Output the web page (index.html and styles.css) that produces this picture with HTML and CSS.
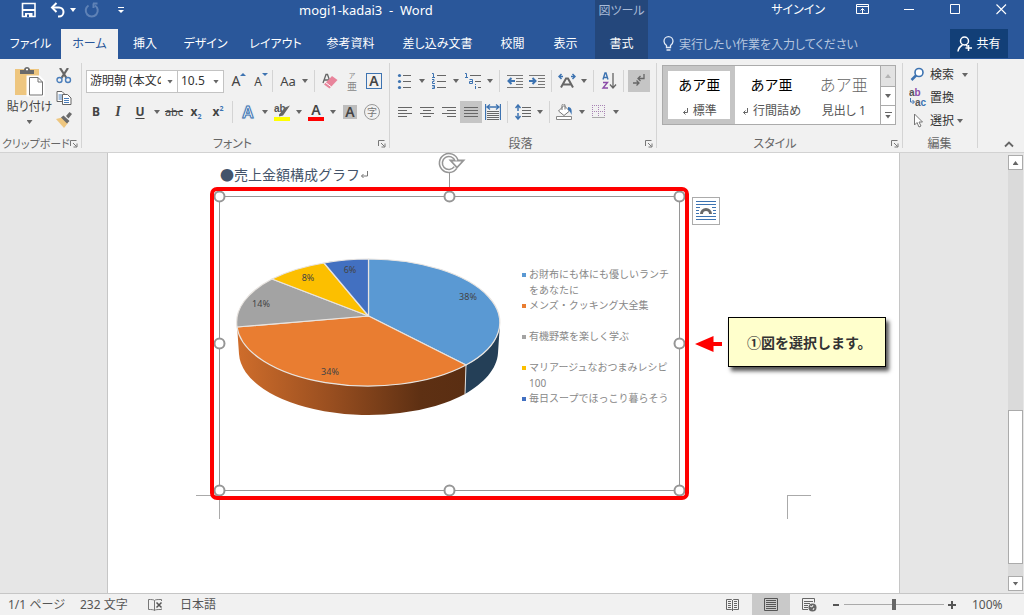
FILE: index.html
```html
<!DOCTYPE html>
<html lang="ja">
<head>
<meta charset="utf-8">
<title>mogi1-kadai3 - Word</title>
<link rel="stylesheet" href="styles.css">
</head>
<body>
<div class="app">
  <header class="header">
    <div class="title-left">
      <button class="qa" aria-label="上書き保存"><svg width="16" height="16" viewBox="0 0 16 16"><path d="M1.5 1.5h12.5v13h-12.5z" fill="none" stroke="#fff" stroke-width="1.6"/><path d="M1 7h13v2h-13zM4 11h7.500v4h-7.500z" fill="#fff"/><path d="M6 12.500h2v2.500h-2z" fill="#2a579a"/></svg></button>
      <button class="qa qa-undo" aria-label="元に戻す"><svg width="16" height="16" viewBox="0 0 16 16"><path d="M2.500 5.500h6.500a4.500 4.500 0 0 1 0 9h-1" fill="none" stroke="#fff" stroke-width="2"/><path d="M6.500 1l-4.500 4.500 4.500 4.500" fill="none" stroke="#fff" stroke-width="2"/></svg><i class="caret light"></i></button>
      <button class="qa qa-redo" aria-label="繰り返し"><svg width="16" height="16" viewBox="0 0 16 16"><path d="M4.500 3.500a6 6 0 1 0 6.500 0M9 1.500h4.500M9.500 1.500v4.500" fill="none" stroke="#5f82b6" stroke-width="2"/></svg></button>
      <button class="qa qa-more" aria-label="クイック アクセス ツール バーのユーザー設定"><svg width="7" height="7" viewBox="0 0 7 7"><path d="M0 .5h6" stroke="#fff"/><path d="M0 3h6l-3 3z" fill="#fff"/></svg></button>
      <h1 class="doc-title">mogi1-kadai3 &nbsp;- &nbsp;Word</h1>
    </div>
    <nav class="tabs">
      <button class="tab">ファイル</button>
      <button class="tab active">ホーム</button>
      <button class="tab">挿入</button>
      <button class="tab">デザイン</button>
      <button class="tab">レイアウト</button>
      <button class="tab">参考資料</button>
      <button class="tab">差し込み文書</button>
      <button class="tab">校閲</button>
      <button class="tab">表示</button>
    </nav>
    <div class="context">
      <span class="context-name">図ツール</span>
      <button class="tab">書式</button>
    </div>
    <div class="title-right">
      <a class="signin" href="#">サインイン</a>
      <button class="win" aria-label="リボンの表示オプション"><svg width="14" height="11" viewBox="0 0 14 11"><path d="M.5.500h12v9h-12zM.5 2.500h12M6.500 9v-4.500M4.500 6.500l2-2 2 2" fill="none" stroke="#fff"/></svg></button>
      <button class="win" aria-label="最小化"><svg width="11" height="11" viewBox="0 0 11 11"><path d="M0 5.500h10" stroke="#fff"/></svg></button>
      <button class="win" aria-label="最大化"><svg width="11" height="11" viewBox="0 0 11 11"><path d="M.5.500h9v9h-9z" fill="none" stroke="#fff"/></svg></button>
      <button class="win" aria-label="閉じる"><svg width="11" height="11" viewBox="0 0 11 11"><path d="M.5.500l9.500 9.500M10 .5L.5 10" fill="none" stroke="#fff" stroke-width="1.100"/></svg></button>
    </div>
    <div class="tell-row">
      <label class="tell"><svg width="12" height="16" viewBox="0 0 12 16"><path d="M3.500 11.500v-2c-1.500-1.200-2.500-2.400-2.500-4.300a4.500 4.500 0 0 1 9 0c0 1.900-1 3.100-2.500 4.300v2zM3.500 14h4" fill="none" stroke="#e3eaf5" stroke-width="1.300"/></svg><input type="text" placeholder="実行したい作業を入力してください" aria-label="実行したい作業"></label>
      <button class="share"><svg width="16" height="16" viewBox="0 0 16 16"><circle cx="7.500" cy="5" r="4" fill="none" stroke="#fff" stroke-width="1.500"/><path d="M1 15.500c.3-3.500 2-5 4.500-6.500M9 9l1.500 1.500M11.500 9v6M8.500 12h6.500" fill="none" stroke="#fff" stroke-width="1.500"/></svg>共有</button>
    </div>
  </header>

  <section class="ribbon" aria-label="ホーム">
    <div class="group g-clip">
      <div class="body clip">
        <button class="paste"><svg width="32" height="32" viewBox="0 0 32 32"><path d="M1 4h24v26h-24z" fill="#eec67f"/><path d="M6 5h4c0-4 6-4 6 0h4v4h-14z" fill="#6a6a6a"/><path d="M12 4.500h2" stroke="#fff" stroke-width="1.500"/><path d="M14 12h11l4 4v14h-15z" fill="#fff" stroke="#fff" stroke-width="3"/><path d="M15.500 12.500h8.500l4.500 4.500v13h-13zM24 12.500v4.500h4.500" fill="#fff" stroke="#737373"/></svg><span>貼り付け</span><i class="caret"></i></button>
        <div class="clip-side">
          <button class="ib" aria-label="切り取り"><svg width="16" height="16" viewBox="0 0 16 16"><path d="M4 0l6.500 10M12 0l-6.500 10" stroke="#666" stroke-width="2.200"/><g fill="#f1f1f1" stroke="#4a7ebb" stroke-width="1.400"><circle cx="3.500" cy="12" r="2.500"/><circle cx="12" cy="12" r="2.500"/></g></svg></button>
          <button class="ib" aria-label="コピー"><svg width="16" height="16" viewBox="0 0 16 16"><path d="M1 1.500h5l3 3v7h-8z" fill="#fff" stroke="#666"/><path d="M2.500 5h4M2.500 7h4M2.500 9h4" stroke="#4a7ebb"/><path d="M6.500 4.500h5l3.500 3.500v6.500h-8.500z" fill="#fff" stroke="#666"/><path d="M8 8.500h5M8 10.500h5M8 12.500h5" stroke="#4a7ebb"/></svg></button>
          <button class="ib" aria-label="書式のコピー/貼り付け"><svg width="16" height="16" viewBox="0 0 16 16"><path d="M0 7l6-1.500 6 5.500-4 5z" fill="#eec67f"/><path d="M5 5.500l6 6 2.500-2.500-6-5.500zM10 4l3.500-4 2.500 2-3.500 4.500z" fill="#6a6a6a"/></svg></button>
        </div>
      </div>
      <div class="foot"><span>クリップボード</span><button class="launch" aria-label="クリップボードの設定"><svg width="8" height="8" viewBox="0 0 8 8"><path d="M.5 6v-5.500h6M3 3l3.500 3.500M7 3.500v3.500h-3.500" fill="none" stroke="#777"/></svg></button></div>
    </div>

    <div class="group g-font">
      <div class="body rows">
        <div class="row">
          <span class="combo name"><select aria-label="フォント"><option>游明朝 (本文のフォント - 日本語)</option></select><i class="caret"></i></span>
          <span class="combo size"><select aria-label="フォント サイズ"><option>10.5</option></select><i class="caret"></i></span>
          <button class="ib" aria-label="フォントの拡大"><span class="grow">A</span><i class="up-mark"></i></button>
          <button class="ib" aria-label="フォントの縮小"><span class="shrink">A</span><i class="down-mark"></i></button>
          <span class="sep"></span>
          <button class="split"><span class="aa">Aa</span><i class="caret"></i></button>
          <span class="sep"></span>
          <button class="ib" aria-label="すべての書式をクリア"><svg width="16" height="16" viewBox="0 0 16 16"><path d="M1 10l3-8.500h1.500l3 8.500M2.500 7h5" fill="none" stroke="#666" stroke-width="1.300"/><path d="M2 11.500l8-8.500 5.500 4-8 8.500z" fill="#e8849b"/><path d="M3.500 9.500l6 4.500" stroke="#fff"/></svg></button>
          <button class="ib ruby" aria-label="ルビ"><span class="kana">ア</span><span class="kanji">亜</span></button>
          <button class="ib" aria-label="囲み線"><span class="boxed">A</span></button>
        </div>
        <div class="row">
          <button class="ib b">B</button>
          <button class="ib i">I</button>
          <button class="split u"><span>U</span><i class="caret"></i></button>
          <button class="ib strike">abc</button>
          <button class="ib subsup">x<sub>2</sub></button>
          <button class="ib subsup">x<sup>2</sup></button>
          <span class="sep"></span>
          <button class="split"><span class="effect">A</span><i class="caret"></i></button>
          <button class="split" aria-label="蛍光ペンの色"><svg width="18" height="20" viewBox="0 0 18 20"><text x="1" y="10" class="hl-text">ab</text><path d="M6 12.500l6-7 5-2-7 10-4 1z" fill="#666"/><path d="M1 15h16v4h-16z" fill="#ff0"/></svg><i class="caret"></i></button>
          <button class="split"><span class="font-color">A</span><i class="caret"></i></button>
          <button class="ib" aria-label="文字の網かけ"><span class="shaded">A</span></button>
          <button class="ib" aria-label="囲い文字"><span class="circled">字</span></button>
        </div>
      </div>
      <div class="foot"><span>フォント</span><button class="launch" aria-label="フォントの設定"><svg width="8" height="8" viewBox="0 0 8 8"><path d="M.5 6v-5.500h6M3 3l3.500 3.500M7 3.500v3.500h-3.500" fill="none" stroke="#777"/></svg></button></div>
    </div>

    <div class="group g-para">
      <div class="body rows">
        <div class="row">
          <button class="split" aria-label="箇条書き"><svg width="16" height="16" viewBox="0 0 16 16"><path d="M6 2.500h8M6 8.500h8M6 14.500h8" stroke="#666"/><g fill="#3d73b1"><circle cx="2.500" cy="2.500" r="1.600"/><circle cx="2.500" cy="8.500" r="1.600"/><circle cx="2.500" cy="14.500" r="1.600"/></g></svg><i class="caret"></i></button>
          <button class="split" aria-label="段落番号"><svg width="16" height="16" viewBox="0 0 16 16"><path d="M6 2.500h9M6 8.500h9M6 14.500h9" stroke="#666"/><path d="M1 .5h1.500v4M1 4.500h3M1 6.500h2v2h-1.500v2h2.500M1 12.500h2.500v3h-2.500M1.500 14h2" fill="none" stroke="#3d73b1"/></svg><i class="caret"></i></button>
          <button class="split" aria-label="アウトライン"><svg width="18" height="18" viewBox="0 0 18 18"><path d="M6 3.500h11M11 9.500h6M14 15.500h3" stroke="#666"/><path d="M1 1.500h1.500v3.500M1 5.500h3M5.500 7.500h3v4h-3v-2h3M11.500 12v1M11.500 14v3" fill="none" stroke="#3d73b1"/></svg><i class="caret"></i></button>
          <span class="sep"></span>
          <button class="ib" aria-label="インデントを減らす"><svg width="16" height="16" viewBox="0 0 16 16"><path d="M0 2.500h16M9 5.500h7M9 8.500h7M9 11.500h7M0 14.500h16" stroke="#777"/><path d="M8 8h-6M4.500 5l-3 3 3 3" fill="none" stroke="#3d73b1" stroke-width="2"/></svg></button>
          <button class="ib" aria-label="インデントを増やす"><svg width="16" height="16" viewBox="0 0 16 16"><path d="M0 2.500h16M9 5.500h7M9 8.500h7M9 11.500h7M0 14.500h16" stroke="#777"/><path d="M0 8h6M3.500 5l3 3-3 3" fill="none" stroke="#3d73b1" stroke-width="2"/></svg></button>
          <span class="sep"></span>
          <button class="split" aria-label="拡張書式"><svg width="18" height="16" viewBox="0 0 18 16"><path d="M3 14.500l5-9h2l5 9M5 11.500h8" fill="none" stroke="#666" stroke-width="2"/><path d="M3.500 1l-2.500 2.500 2.500 2.500M1 3.500h4M14.500 1l2.500 2.500-2.500 2.500M17 3.500h-4" fill="none" stroke="#3d73b1" stroke-width="1.500"/></svg><i class="caret"></i></button>
          <span class="sep"></span>
          <button class="ib" aria-label="並べ替え"><svg width="16" height="18" viewBox="0 0 16 18"><path d="M2 7.500l2-6.500h1l2 6.500M2.500 5.500h4" fill="none" stroke="#3d73b1" stroke-width="1.400"/><path d="M2 10.500h4.500l-4.500 5.500h5" fill="none" stroke="#8b4ba8" stroke-width="1.400"/><path d="M12 1v15M9 12.500l3 3.500 3-3.500" fill="none" stroke="#666" stroke-width="1.300"/></svg></button>
          <span class="sep"></span>
          <button class="ib pressed" aria-label="編集記号の表示/非表示"><svg width="14" height="16" viewBox="0 0 14 16"><path d="M12 1v4.500h-6M8.500 3l-2.500 2.500 2.500 2.500M1 10h6M4.500 7.500l2.500 2.500-2.500 2.500" fill="none" stroke="#666" stroke-width="1.300"/></svg></button>
        </div>
        <div class="row">
          <button class="ib" aria-label="左揃え"><svg width="14" height="14" viewBox="0 0 14 14"><path d="M0 2.500h14M0 5.500h9M0 8.500h14M0 11.500h9" stroke="#666"/></svg></button>
          <button class="ib" aria-label="中央揃え"><svg width="14" height="14" viewBox="0 0 14 14"><path d="M0 2.500h14M3 5.500h8M0 8.500h14M3 11.500h8" stroke="#666"/></svg></button>
          <button class="ib" aria-label="右揃え"><svg width="14" height="14" viewBox="0 0 14 14"><path d="M0 2.500h14M5 5.500h9M0 8.500h14M5 11.500h9" stroke="#666"/></svg></button>
          <button class="ib pressed" aria-label="両端揃え"><svg width="14" height="14" viewBox="0 0 14 14"><path d="M0 2.500h14M0 5.500h14M0 8.500h14M0 11.500h14" stroke="#666"/></svg></button>
          <button class="ib" aria-label="均等割り付け"><svg width="16" height="16" viewBox="0 0 16 16"><path d="M.5 0v16M15.500 0v16M2 3h12M5 .500l-3 2.500 3 2.500M11 .500l3 2.500-3 2.500" fill="none" stroke="#3d73b1" stroke-width="1.300"/><path d="M2 7.500h12M2 9.500h12M2 11.500h12M2 13.500h12M2 15.500h12" stroke="#666"/></svg></button>
          <span class="sep"></span>
          <button class="split" aria-label="行間"><svg width="16" height="16" viewBox="0 0 16 16"><path d="M7 3.500h9M7 6.500h9M7 9.500h9M7 12.500h9" stroke="#666"/><path d="M3 1v6M.5 4l2.500-3 2.500 3M3 9v6M.5 12l2.500 3 2.500-3" fill="none" stroke="#3d73b1" stroke-width="1.500"/></svg><i class="caret"></i></button>
          <span class="sep"></span>
          <button class="split" aria-label="塗りつぶし"><svg width="18" height="16" viewBox="0 0 18 16"><path d="M2.500 7l5.500-5.500 5.500 5.500-5.500 4.500zM6 6v-4.500c0-2 3-2 3 0v4" fill="#fff" stroke="#777"/><path d="M12 3c4 0 4 4 3.500 8-1-2.500-1.500-4-3.500-5z" fill="#3d73b1"/><path d="M.5 12.500h15v3h-15z" fill="#fff" stroke="#888"/></svg><i class="caret"></i></button>
          <button class="split" aria-label="罫線"><svg width="14" height="14" viewBox="0 0 14 14"><path d="M0 .5h13M12.500 0v13M.5 0v13M6.500 0v12M0 6.500h13" fill="none" stroke="#a884b4" stroke-dasharray="1 1"/><path d="M0 12.500h13" stroke="#aaa"/></svg><i class="caret"></i></button>
        </div>
      </div>
      <div class="foot"><span>段落</span><button class="launch" aria-label="段落の設定"><svg width="8" height="8" viewBox="0 0 8 8"><path d="M.5 6v-5.500h6M3 3l3.500 3.500M7 3.500v3.500h-3.500" fill="none" stroke="#777"/></svg></button></div>
    </div>

    <div class="group g-style">
      <div class="body gallery-wrap">
        <div class="gallery">
          <button class="style selected"><b>あア亜</b><span><svg width="7" height="7" viewBox="0 0 7 7"><path d="M5.500 0v4.500h-4M3.500 2.500l-2 2 2 2" fill="none" stroke="#666"/></svg>標準</span></button>
          <button class="style"><b>あア亜</b><span><svg width="7" height="7" viewBox="0 0 7 7"><path d="M5.500 0v4.500h-4M3.500 2.500l-2 2 2 2" fill="none" stroke="#666"/></svg>行間詰め</span></button>
          <button class="style heading"><b>あア亜</b><span>見出し 1</span></button>
          <div class="gallery-nav">
            <button class="off" aria-label="前の行"><i class="caret up"></i></button>
            <button aria-label="次の行"><i class="caret"></i></button>
            <button aria-label="その他"><i class="bar"></i><i class="caret"></i></button>
          </div>
        </div>
      </div>
      <div class="foot"><span>スタイル</span><button class="launch" aria-label="スタイルの設定"><svg width="8" height="8" viewBox="0 0 8 8"><path d="M.5 6v-5.500h6M3 3l3.500 3.500M7 3.500v3.500h-3.500" fill="none" stroke="#777"/></svg></button></div>
    </div>

    <div class="group g-edit">
      <div class="body edit">
        <button><svg width="16" height="16" viewBox="0 0 16 16"><path d="M1.500 13l5-5" stroke="#3d73b1" stroke-width="2.500"/><circle cx="9" cy="5.500" r="4" fill="#fff" stroke="#3d73b1" stroke-width="1.600"/></svg>検索<i class="caret far"></i></button>
        <button><svg width="18" height="22" viewBox="0 0 18 22"><text x="0" y="9" class="rep">a<tspan fill="#8b4ba8">b</tspan></text><text x="6" y="19" class="rep">a<tspan fill="#3d73b1">c</tspan></text><path d="M1.500 11v4h3.500M3.500 13l2 2-2 2" fill="none" stroke="#3d73b1"/></svg>置換</button>
        <button><svg width="16" height="16" viewBox="0 0 16 16"><path d="M4.500 1v11l2.500-2.500 2 4.500 2-1-2-4h3.500z" fill="#fff" stroke="#777"/></svg>選択<i class="caret"></i></button>
      </div>
      <div class="foot"><span>編集</span></div>
    </div>
    <button class="collapse" aria-label="リボンを折りたたむ"><svg width="10" height="7" viewBox="0 0 10 7"><path d="M1 5.500l4-4 4 4" fill="none" stroke="#666" stroke-width="1.800"/></svg></button>
  </section>

  <main class="workspace">
    <div class="desk">
      <article class="page">
        <h2 class="heading-line">●売上金額構成グラフ<svg width="9" height="10" viewBox="0 0 9 10"><path d="M7.500 1v5h-6M3.500 4l-2 2 2 2" fill="none" stroke="#777"/></svg></h2>
        <figure class="chart">
          <svg class="pie" width="300" height="295" viewBox="219 196 300 295" role="img" aria-label="売上金額構成グラフ">
            <defs><linearGradient id="side" x1="0" x2="1"><stop offset="0" stop-color="#cf6d2b"/><stop offset=".4" stop-color="#9a4f20"/><stop offset=".8" stop-color="#5e3013"/><stop offset="1" stop-color="#5a2e12"/></linearGradient></defs>
            <path d="M237 325l2 29a129.500 63 0 0 0 226 40l1-29a131.500 63.500 0 0 1-229-40z" fill="url(#side)"/>
            <path d="M500 323l-2 30c-1 16-14 30-33 41l1-29c22-11 33-26 34-42z" fill="#243f57"/>
            <g stroke="#e8e4e0" stroke-width="1.200" stroke-linejoin="round">
              <path d="M368.500 316V259A131.500 63.500 0 0 1 466 365z" fill="#5a99d3"/>
              <path d="M368.500 316L466 365A131.500 63.500 0 0 1 237 327z" fill="#e97d31"/>
              <path d="M368.500 316L237 327A131.500 63.500 0 0 1 272 279z" fill="#a3a3a3"/>
              <path d="M368.500 316L272 279A131.500 63.500 0 0 1 324 263z" fill="#fcbf00"/>
              <path d="M368.500 316L324 263A131.500 63.500 0 0 1 368.500 259z" fill="#4270c1"/>
            </g>
            <path d="M466 365l-1 29" stroke="#ddd"/>
            <g class="pct"><text x="468" y="300">38%</text><text x="330" y="375">34%</text><text x="261" y="307">14%</text><text x="308" y="281">8%</text><text x="350" y="273">6%</text></g>
          </svg>
          <ul class="legend">
            <li class="k1">お財布にも体にも優しいランチ<br>をあなたに</li>
            <li class="k2">メンズ・クッキング大全集</li>
            <li class="k3">有機野菜を楽しく学ぶ</li>
            <li class="k4">マリアージュなおつまみレシピ<br>100</li>
            <li class="k5">毎日スープでほっこり暮らそう</li>
          </ul>
          <svg class="selection" width="461" height="295" viewBox="0 0 461 295">
            <path d="M.5.500h460v294h-460zM230.500 0v-26" fill="none" stroke="#969696"/>
            <g fill="#fff" stroke="#969696" stroke-width="2"><circle cx=".5" cy=".5" r="5"/><circle cx="230.500" cy=".5" r="5"/><circle cx="460.500" cy=".5" r="5"/><circle cx=".5" cy="147.500" r="5"/><circle cx="460.500" cy="147.500" r="5"/><circle cx=".5" cy="294.500" r="5"/><circle cx="230.500" cy="294.500" r="5"/><circle cx="460.500" cy="294.500" r="5"/></g>
            <path d="M236.500 -28.500a8 8 0 1 1 1-7" fill="none" stroke="#969696" stroke-width="4.500"/>
            <path d="M231.500 -35.500h13l-6.500 7z" fill="#fff" stroke="#969696" stroke-width="1.800"/>
            <path d="M236.500 -28.500a8 8 0 1 1 1-7" fill="none" stroke="#fff" stroke-width="1.400"/>
          </svg>
          <div class="red-frame"></div>
          <button class="layout-options" aria-label="レイアウト オプション"><svg width="20" height="20" viewBox="0 0 20 20"><path d="M0 .5h20M0 3.500h20M0 6.500h4M16 6.500h4M0 9.500h3M17 9.500h3M0 12.500h3M17 12.500h3M0 15.500h20M0 18.500h20" stroke="#3d73b1"/><path d="M5.500 13a4.500 4.500 0 0 1 9 0" fill="none" stroke="#6a6a6a" stroke-width="3"/></svg></button>
          <svg class="arrow" width="28" height="16" viewBox="0 0 28 16"><path d="M0 8L18.500 0v6H27v4h-8.500v6z" fill="#f00"/></svg>
          <p class="callout">①図を選択します。</p>
        </figure>
        <div class="crops"><i class="crop left"></i><i class="crop right"></i></div>
      </article>
    </div>
    <div class="scroll">
      <button aria-label="上へ"><i class="caret up"></i></button>
      <div class="track"><div class="thumb"></div></div>
      <button aria-label="下へ"><i class="caret"></i></button>
    </div>
  </main>

  <footer class="status">
    <span class="st-page">1/1 ページ</span>
    <span class="st-words">232 文字</span>
    <button class="st-proof" aria-label="校正"><svg width="15" height="13" viewBox="0 0 15 13"><path d="M6.500 12.500c-1-1-3-1-6-1v-10c3 0 5 0 6 1zM6.500 2.500c1-1 3-1 7-1v1.500M6.500 12.500c1-1 3-1 7-1v-1" fill="none" stroke="#777"/><path d="M8.500 4.500l5 5M13.500 4.500l-5 5" stroke="#555" stroke-width="1.500"/></svg></button>
    <span>日本語</span>
    <span class="spring"></span>
    <button class="view" aria-label="閲覧モード"><svg width="14" height="14" viewBox="0 0 14 14"><path d="M.5 1.500h5l1 1 1-1h5v10h-5l-1 1-1-1h-5zM6.500 2v11M2 3.500h3M2 5.500h3M2 7.500h3M2 9.500h3M8 3.500h3M8 5.500h3M8 7.500h3M8 9.500h3" fill="none" stroke="#666"/></svg></button>
    <button class="view on" aria-label="印刷レイアウト"><svg width="14" height="14" viewBox="0 0 14 14"><path d="M.5.500h13v12h-13zM2 2.500h10M2 4.500h10M2 6.500h10M2 8.500h10M2 10.500h10" fill="none" stroke="#555"/></svg></button>
    <button class="view" aria-label="Web レイアウト"><svg width="15" height="14" viewBox="0 0 15 14"><path d="M6 11.500h-5.500v-11h12v4M2 3.500h9M2 5.500h6M2 7.500h4M2 9.500h4" fill="none" stroke="#666"/><circle cx="10.500" cy="9.500" r="4" fill="#666"/><path d="M8 8l2 1 1-2M11 12l1-2" fill="none" stroke="#f1f1f1"/></svg></button>
    <button class="zoom-btn" aria-label="縮小"><svg width="10" height="10" viewBox="0 0 10 10"><path d="M2 5h6" stroke="#555" stroke-width="2"/></svg></button>
    <input class="zoom" type="range" min="0" max="100" value="50" aria-label="ズーム">
    <button class="zoom-btn" aria-label="拡大"><svg width="10" height="10" viewBox="0 0 10 10"><path d="M1 5h8M5 1v8" stroke="#555" stroke-width="2"/></svg></button>
    <span class="pctval">100%</span>
  </footer>
</div>
</body>
</html>
```
FILE: styles.css
```css
* { box-sizing: border-box; }
body {
  margin: 0;
  font: 12px/16px "Noto Sans", "Noto Sans CJK JP", sans-serif;
  font-feature-settings: "palt";
  color: #444;
}
button, input, select {
  font: inherit;
  font-feature-settings: inherit;
  color: inherit;
  border: 0;
  padding: 0;
  margin: 0;
  background: none;
}
button { display: flex; align-items: center; justify-content: center; white-space: nowrap; }
svg { display: block; flex: none; }
.app { display: flex; flex-direction: column; min-height: 100vh; }

.caret { display: block; flex: none; width: 6px; height: 4px; background: #666; clip-path: polygon(0 0, 100% 0, 50% 100%); }
.caret.up { transform: scaleY(-1); }
.caret.light { background: #fff; }

/* Title bar and tabs */
.header {
  display: grid;
  grid-template-columns: 595px 53px 1fr;
  grid-template-rows: 29px 30px;
  background: #2a579a;
  color: #fff;
}
.title-left { display: flex; align-items: flex-start; padding: 2px 0 0 21px; }
.qa { height: 16px; }
.qa-undo { gap: 4px; margin-left: 13px; }
.qa-redo { margin-left: 8px; }
.qa-more { margin-left: 18px; }
.doc-title { margin: 0 0 0 174px; font-size: 13px; font-weight: 400; line-height: 16px; }
.tabs { grid-row: 2; grid-column: 1; display: grid; grid-template-columns: 61px 57px 54px 67px 73px 77px 97px 53px 53px; }
.tab { color: #fff; }
.tab.active { background: #f1f1f1; color: #2a579a; }
.context { grid-column: 2; grid-row: 1 / 3; display: grid; grid-template-rows: 29px 30px; background: #24477b; }
.context-name { color: #a9bbd7; text-align: center; line-height: 22px; }
.title-right { display: flex; justify-content: flex-end; align-items: flex-start; padding-top: 1px; }
.signin { color: #fff; text-decoration: none; line-height: 18px; margin-right: 15px; }
.win { width: 46px; height: 16px; }
.tell-row { grid-column: 3; grid-row: 2; display: flex; justify-content: space-between; align-items: flex-start; padding: 0 16px 0 15px; }
.tell { display: flex; gap: 4px; align-items: center; height: 30px; flex: 1; }
.tell input { flex: 1; height: 20px; }
.tell input::placeholder { color: #b6c6df; opacity: 1; }
.share { width: 58px; height: 29px; gap: 3px; background: #123f77; }

/* Ribbon */
.ribbon { display: flex; background: #f1f1f1; border-bottom: 1px solid #d2d2d2; height: 94px; position: relative; }
.group { display: flex; flex-direction: column; justify-content: space-between; position: relative; flex: none; }
.group::after { content: ""; position: absolute; right: 0; top: 4px; bottom: 4px; width: 1px; background: #d4d4d4; }
.g-clip { width: 82px; }
.g-font { width: 308px; padding-left: 3px; }
.g-para { width: 267px; padding-left: 4px; }
.g-style { width: 246px; }
.g-edit { width: 75px; }
.foot { display: flex; align-items: center; justify-content: center; height: 16px; color: #666; padding: 0 4px 0 2px; }
.foot span { flex: 1; text-align: center; white-space: nowrap; }
.launch { width: 8px; height: 12px; }
.g-clip .foot { font-size: 11px; }
.g-clip .foot span { text-align: left; }
.body { flex: 1; }
.clip { display: flex; padding: 6px 0 0 8px; }
.paste { flex-direction: column; justify-content: flex-start; width: 43px; }
.paste span { line-height: 20px; }
.paste .caret { margin-top: 3px; }
.clip-side { display: flex; flex-direction: column; margin-left: 2px; }
.ib { width: 22px; height: 22px; position: relative; flex: none; }
.split { width: 34px; height: 22px; flex: none; display: grid; grid-template-columns: 22px 12px; justify-items: center; align-items: center; }
.pressed { background: #c5c5c5; }
.rows { display: flex; flex-direction: column; gap: 9px; padding-top: 11px; }
.row { display: flex; align-items: center; height: 22px; }
.sep { width: 1px; height: 22px; margin: 0 4px 0 3px; background: #d4d4d4; }
.combo { position: relative; height: 23px; background: #fff; border: 1px solid #c3c3c3; overflow: hidden; }
.combo + .combo { border-left: 0; }
.combo.name { width: 92px; margin-left: 1px; }
.combo.size { width: 46px; margin-right: 1px; }
.combo select { appearance: none; width: 100%; height: 21px; padding: 0 16px 0 3px; color: #333; }
.combo .caret { position: absolute; right: 4px; top: 9px; }
.grow { font-size: 14px; }
.shrink { font-size: 12px; padding-top: 2px; }
.up-mark, .down-mark { position: absolute; right: 1px; top: 3px; width: 6px; height: 3px; background: #3d73b1; clip-path: polygon(50% 0, 100% 100%, 0 100%); }
.down-mark { clip-path: polygon(0 0, 100% 0, 50% 100%); }
.aa { font-size: 13px; }
.ruby { color: #888; flex-direction: column; font-family: "Noto Sans CJK JP", sans-serif; }
.kana { font-size: 7px; line-height: 9px; }
.kanji { font-size: 10px; line-height: 12px; }
.boxed { width: 16px; height: 16px; border: 1px solid #3d73b1; font-size: 14px; line-height: 14px; font-weight: 600; }
.b { font-weight: 700; }
.i { font-family: "Liberation Serif", serif; font-style: italic; font-weight: 700; font-size: 14px; }
.u span { text-decoration: underline; text-underline-offset: 2px; font-weight: 700; }
.strike { text-decoration: line-through; font-size: 11px; }
.subsup { font-weight: 700; }
.subsup sub, .subsup sup { font-size: 7px; color: #3d73b1; line-height: 7px; }
.subsup sub { padding-top: 8px; }
.subsup sup { padding-bottom: 8px; }
.effect { font-size: 16px; font-weight: 600; color: #fff; -webkit-text-stroke: 1px #3d73b1; text-shadow: 0 0 2px #7aa6d8; }
.hl-text { font: 700 10px "Liberation Sans", sans-serif; fill: #555; }
.font-color { width: 16px; height: 18px; border-bottom: 4px solid #f00; font-size: 14px; line-height: 14px; font-weight: 600; }
.shaded { width: 14px; height: 14px; background: #bdbdbd; font-size: 14px; line-height: 14px; font-weight: 600; }
.circled { width: 16px; height: 16px; border: 1px solid #999; border-radius: 50%; font-size: 10px; line-height: 14px; color: #777; }

.gallery-wrap { padding: 6px 7px 0 5px; }
.gallery { display: grid; grid-template-columns: 1fr 1fr 1fr 15px; height: 60px; border: 1px solid #ababab; background: #fff; }
.style { flex-direction: column; gap: 10px; padding-top: 6px; }
.style.selected { border: 5px solid #c5c5c5; }
.style b { font-size: 14px; font-weight: 400; color: #000; font-feature-settings: normal; }
.style.heading b { color: #666; font-size: 16px; font-weight: 300; }
.style span { display: flex; align-items: center; gap: 4px; color: #555; }
.gallery-nav { display: grid; grid-template-rows: 20px 19px 1fr; border-left: 1px solid #ababab; }
.gallery-nav button { flex-direction: column; gap: 2px; }
.gallery-nav button + button { border-top: 1px solid #ababab; }
.gallery-nav .off { background: #e2e2e2; }
.gallery-nav .off .caret { background: #b4b4b4; }
.bar { width: 7px; height: 1px; background: #666; }
.edit { display: flex; flex-direction: column; align-items: flex-start; gap: 1px; padding: 5px 0 0 6px; }
.edit button { height: 22px; gap: 3px; color: #333; }
.edit svg { width: 18px; }
.rep { font: 700 10px "Liberation Sans", sans-serif; fill: #555; }
.far { margin-left: 5px; }
.collapse { position: absolute; right: 10px; bottom: 4px; height: 8px; }

/* Document */
.workspace { flex: 1; display: flex; background: #e6e6e6; min-height: 0; }
.desk { flex: 1; display: flex; justify-content: center; }
.page { width: 793px; padding: 12px 111px 74px; background: #fff; border: solid #c6c6c6; border-width: 0 1px; }
.heading-line { display: flex; align-items: center; margin: 0 0 11px 1px; font-size: 14px; line-height: 20px; font-weight: 400; color: #44546a; font-feature-settings: normal; }
.chart { position: relative; display: flex; width: 461px; height: 295px; margin: 0; }
.legend { list-style: none; margin: 0; padding: 70px 0 0 3px; font-size: 10px; line-height: 16px; color: #888; font-feature-settings: normal; }
.legend li { height: 31px; padding-left: 7px; white-space: nowrap; background: linear-gradient(var(--key), var(--key)) 0 7px / 4px 4px no-repeat; }
.k1 { --key: #5a99d3; }
.k2 { --key: #e97d31; }
.k3 { --key: #a3a3a3; }
.k4 { --key: #fcbf00; }
.k5 { --key: #4270c1; }
.pct { font: 9px "Noto Sans", sans-serif; fill: #444; text-anchor: middle; }
.selection { position: absolute; left: 0; top: 0; overflow: visible; }
.red-frame { position: absolute; inset: -9px; border: 4px solid #f00; border-radius: 7px; }
.layout-options { position: absolute; left: 473px; top: 1px; width: 28px; height: 28px; border: 1px solid #ababab; background: #fff; }
.arrow { position: absolute; left: 476px; top: 140px; }
.callout { position: absolute; left: 509px; top: 121px; width: 158px; margin: 0; padding: 16px 0 16px 18px; border: 1px solid #000; background: #ffffcc; box-shadow: 3px 4px 4px #555; white-space: nowrap; font-family: "Noto Sans CJK JP", sans-serif; font-feature-settings: normal; font-size: 14px; line-height: 16px; font-weight: 700; color: #333; }
.crops { display: flex; justify-content: space-between; margin: 4px -23px 0; }
.crop { width: 24px; height: 24px; border-top: 1px solid #aaa; }
.crop.left { border-right: 1px solid #aaa; }
.crop.right { border-left: 1px solid #aaa; }
.scroll { display: flex; flex-direction: column; width: 17px; padding: 2px 1px; }
.scroll button { height: 15px; border: 1px solid #ababab; background: #fff; }
.track { flex: 1; display: flex; flex-direction: column; justify-content: flex-end; background: #dadada; padding-bottom: 12px; }
.thumb { height: 39%; border: 1px solid #ababab; background: #fff; }

/* Status bar */
.status { display: flex; align-items: center; height: 22px; background: #f1f1f1; border-top: 1px solid #c6c6c6; padding: 0 19px 0 8px; color: #555; white-space: nowrap; }
.st-page { width: 72px; }
.st-words { width: 68px; }
.st-proof { margin-right: 17px; }
.spring { flex: 1; }
.view { width: 38px; height: 21px; }
.view.on { background: #c9c9c9; }
.zoom-btn { width: 16px; height: 20px; }
.zoom { appearance: none; width: 100px; height: 14px; background: linear-gradient(#aaa, #aaa) center / 100% 1px no-repeat; }
.zoom::-webkit-slider-thumb { appearance: none; width: 4px; height: 11px; background: #666; }
.pctval { width: 33px; margin-left: 12px; }
```
